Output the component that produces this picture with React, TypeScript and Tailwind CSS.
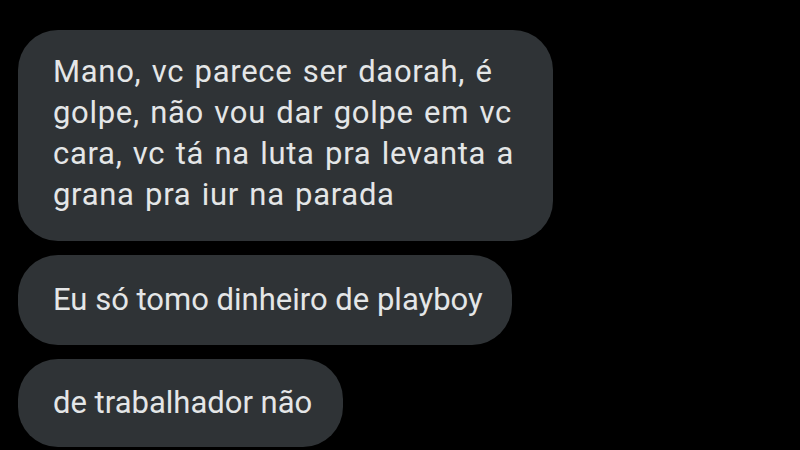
export default function App() {
  const bubble = 'bg-[#2f3336] text-[#e4e6e7] rounded-[40px] pl-[35px] pr-[24px] text-[31px] whitespace-nowrap';
  return (
    <div
      className="w-[800px] h-[450px] bg-black overflow-hidden flex flex-col items-start pl-[18px] pt-[30px] gap-[14px]"
      style={{ fontFamily: 'Roboto, "Noto Sans", sans-serif' }}
    >
      <div className={`${bubble} w-[535px] h-[211px] pt-[21px] pr-[18px] leading-[41px] tracking-[0.7px] [word-spacing:2px] !whitespace-normal`}>
        Mano, vc parece ser daorah, é golpe, não vou dar golpe em vc cara, vc tá na luta pra levanta a grana pra iur na parada
      </div>
      <div className={`${bubble} w-[494px] h-[90px] flex items-center`}>
        Eu só tomo dinheiro de playboy
      </div>
      <div className={`${bubble} w-[325px] h-[88px] flex items-center`}>
        de trabalhador não
      </div>
    </div>
  );
}
